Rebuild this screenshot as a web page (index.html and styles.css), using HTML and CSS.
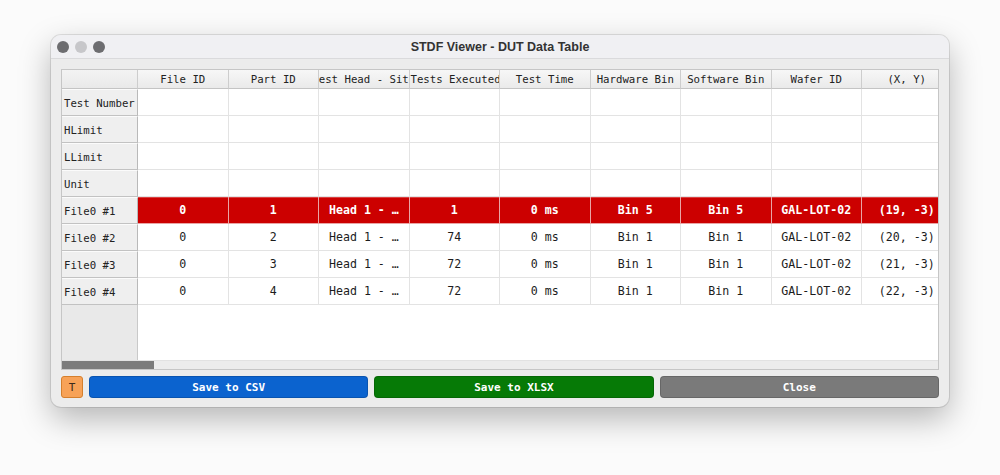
FILE: index.html
```html
<!DOCTYPE html>
<html>
<head>
<meta charset="utf-8">
<link rel="stylesheet" href="styles.css">
</head>
<body>
<div class="window">
  <div class="titlebar">
    <div class="lights"><span class="light dark"></span><span class="light pale"></span><span class="light dark"></span></div>
    <div class="title">STDF Viewer - DUT Data Table</div>
    <div></div>
  </div>
  <div class="content">
    <div class="tableview">
      <div class="scrollarea">
        <div class="grid">
          <div class="hcell corner"></div>
          <div class="hcell">File ID</div>
          <div class="hcell">Part ID</div>
          <div class="hcell">Test Head - Site</div>
          <div class="hcell start">Tests Executed</div>
          <div class="hcell">Test Time</div>
          <div class="hcell">Hardware Bin</div>
          <div class="hcell">Software Bin</div>
          <div class="hcell">Wafer ID</div>
          <div class="hcell">(X, Y)</div>

          <div class="rh">Test Number</div><div class="c"></div><div class="c"></div><div class="c"></div><div class="c"></div><div class="c"></div><div class="c"></div><div class="c"></div><div class="c"></div><div class="c"></div>
          <div class="rh">HLimit</div><div class="c"></div><div class="c"></div><div class="c"></div><div class="c"></div><div class="c"></div><div class="c"></div><div class="c"></div><div class="c"></div><div class="c"></div>
          <div class="rh">LLimit</div><div class="c"></div><div class="c"></div><div class="c"></div><div class="c"></div><div class="c"></div><div class="c"></div><div class="c"></div><div class="c"></div><div class="c"></div>
          <div class="rh">Unit</div><div class="c"></div><div class="c"></div><div class="c"></div><div class="c"></div><div class="c"></div><div class="c"></div><div class="c"></div><div class="c"></div><div class="c"></div>

          <div class="rh">File0 #1</div>
          <div class="c fail">0</div><div class="c fail">1</div><div class="c fail left">Head 1 - …</div><div class="c fail">1</div><div class="c fail">0 ms</div><div class="c fail">Bin 5</div><div class="c fail">Bin 5</div><div class="c fail">GAL-LOT-02</div><div class="c fail">(19, -3)</div>

          <div class="rh">File0 #2</div>
          <div class="c">0</div><div class="c">2</div><div class="c left">Head 1 - …</div><div class="c">74</div><div class="c">0 ms</div><div class="c">Bin 1</div><div class="c">Bin 1</div><div class="c">GAL-LOT-02</div><div class="c">(20, -3)</div>

          <div class="rh">File0 #3</div>
          <div class="c">0</div><div class="c">3</div><div class="c left">Head 1 - …</div><div class="c">72</div><div class="c">0 ms</div><div class="c">Bin 1</div><div class="c">Bin 1</div><div class="c">GAL-LOT-02</div><div class="c">(21, -3)</div>

          <div class="rh">File0 #4</div>
          <div class="c">0</div><div class="c">4</div><div class="c left">Head 1 - …</div><div class="c">72</div><div class="c">0 ms</div><div class="c">Bin 1</div><div class="c">Bin 1</div><div class="c">GAL-LOT-02</div><div class="c">(22, -3)</div>
        </div>
      </div>
      <div class="hscroll"><div class="thumb"></div></div>
    </div>
    <div class="buttons">
      <button class="btn tbtn">T</button>
      <button class="btn blue">Save to CSV</button>
      <button class="btn green">Save to XLSX</button>
      <button class="btn gray">Close</button>
    </div>
  </div>
</div>
</body>
</html>
```

FILE: styles.css
```css
* { box-sizing: border-box; }
html, body { margin: 0; padding: 0; }
body {
  background: #fbfbfb;
  width: 1000px;
  height: 475px;
  overflow: hidden;
  padding: 35px 0 0 51px;
  font-family: "DejaVu Sans Mono", "Liberation Mono", monospace;
}
.window {
  width: 898px;
  height: 372px;
  border-radius: 10px;
  background: #ececec;
  overflow: hidden;
  box-shadow: 0 12px 32px rgba(0,0,0,0.28), 0 0 0 1px rgba(0,0,0,0.10);
  display: flex;
  flex-direction: column;
}
.titlebar {
  height: 24px;
  background: #f0f0f3;
  border-bottom: 1px solid #dadadc;
  display: grid;
  grid-template-columns: 1fr auto 1fr;
  align-items: center;
  flex: none;
}
.lights { display: flex; gap: 6px; padding-left: 6px; }
.light { width: 12px; height: 12px; border-radius: 50%; display: block; }
.light.dark { background: #6d6d70; }
.light.pale { background: #c7c7ca; }
.title {
  font-family: "Liberation Sans", Arial, sans-serif;
  font-weight: bold;
  font-size: 12.5px;
  color: #333;
}
.content {
  flex: 1;
  padding: 10px 10px 9px 10px;
  display: flex;
  flex-direction: column;
  gap: 6px;
}
.tableview {
  height: 301px;
  border: 1px solid #c6c6c6;
  background: #fff;
  display: flex;
  flex-direction: column;
  overflow: hidden;
  flex: none;
}
.scrollarea {
  flex: 1;
  overflow: hidden;
  background: linear-gradient(to right, #e9e9e9 0, #e9e9e9 75px, #c9c9c9 75px, #c9c9c9 76px, #fff 76px);
}
.grid {
  display: grid;
  grid-template-columns: 76px repeat(9, 90.5px);
  grid-template-rows: 19px repeat(8, 27px);
  width: max-content;
}
.hcell {
  font-size: 10.7px;
  color: #222;
  background: linear-gradient(#f7f7f7, #eaeaea);
  border-right: 1px solid #cdcdcd;
  border-bottom: 1px solid #c4c4c4;
  display: flex;
  align-items: center;
  justify-content: center;
  padding-top: 1px;
  white-space: nowrap;
  overflow: hidden;
}
.hcell.start { justify-content: flex-start; padding-left: 1px; }
.hcell.corner { background: linear-gradient(#f3f3f3, #e9e9e9); }
.rh {
  font-size: 10.7px;
  color: #222;
  background: #efefef;
  border-top: 1px solid #fbfbfb;
  border-right: 1px solid #b9b9b9;
  border-bottom: 1px solid #c2c2c2;
  display: flex;
  align-items: center;
  padding-left: 2px;
  padding-top: 1px;
  white-space: nowrap;
  overflow: hidden;
}
.c {
  font-size: 11.6px;
  color: #1c1c1c;
  border-right: 1px solid #e3e3e3;
  border-bottom: 1px solid #e3e3e3;
  display: flex;
  align-items: center;
  justify-content: center;
  white-space: nowrap;
  overflow: hidden;
}
.c.left { justify-content: flex-start; padding-left: 10px; }
.c.fail {
  background: #cc0000;
  color: #fff;
  font-weight: bold;
  border-right-color: #e9a5a5;
  border-bottom-color: #e9a5a5;
  box-shadow: inset 0 1px 0 #d94040;
}
.hscroll {
  height: 9px;
  background: #ececec;
  border-top: 1px solid #e2e2e2;
  flex: none;
}
.thumb {
  width: 92px;
  height: 100%;
  background: #7b7b7b;
}
.buttons {
  display: flex;
  gap: 6px;
  height: 22px;
}
.btn {
  font-family: "DejaVu Sans Mono", "Liberation Mono", monospace;
  font-size: 11px;
  font-weight: bold;
  color: #fff;
  border: 1px solid rgba(0,0,0,0.15);
  border-radius: 4px;
  padding: 0;
  flex: 1;
  height: 22px;
}
.tbtn {
  flex: none;
  width: 22px;
  background: #f7a257;
  border-color: #d57f2c;
  color: #3a2a1a;
  font-weight: normal;
  border-radius: 3px;
}
.blue { background: #0b63cf; }
.green { background: #067a06; }
.gray { background: #7a7a7a; }
```
